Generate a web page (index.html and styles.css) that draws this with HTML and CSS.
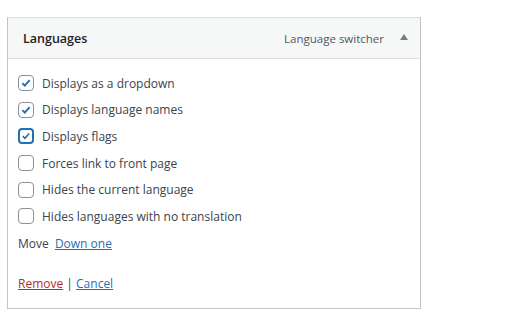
FILE: index.html
```html
<!DOCTYPE html>
<html lang="en">
<head>
    <meta charset="UTF-8">
    <title>Languages widget</title>
    <link rel="stylesheet" href="styles.css">
</head>
<body>
    <div class="widget">
        <div class="widget-top">
            <h3>Languages</h3>
            <span class="in-widget-title">Language switcher</span>
            <span class="toggle"></span>
        </div>
        <div class="widget-inside">
            <ul class="options">
                <li><span class="box checked"><svg viewBox="0 0 16 16"><path d="M3.8 8.2l2.8 2.8 5.6-6.4"/></svg></span>Displays as a dropdown</li>
                <li><span class="box checked"><svg viewBox="0 0 16 16"><path d="M3.8 8.2l2.8 2.8 5.6-6.4"/></svg></span>Displays language names</li>
                <li><span class="box checked focus"><svg viewBox="0 0 16 16"><path d="M3.8 8.2l2.8 2.8 5.6-6.4"/></svg></span>Displays flags</li>
                <li><span class="box"></span>Forces link to front page</li>
                <li><span class="box"></span>Hides the current language</li>
                <li><span class="box"></span>Hides languages with no translation</li>
            </ul>
            <div class="move">Move <a href="#">Down one</a></div>
            <div class="actions"><a class="remove" href="#">Remove</a> | <a href="#">Cancel</a></div>
        </div>
    </div>
</body>
</html>
```

FILE: styles.css
```css
body {
    margin: 0;
    padding: 17px 0 0 7px;
    background: #fff;
    font-family: "Open Sans", sans-serif;
    font-size: 12px;
    color: #3c434a;
}
.widget {
    width: 412px;
    border: 1px solid #c3c4c7;
    border-color: #dcdcde #c3c4c7 #c3c4c7 #c3c4c7;
}
.widget-top {
    display: flex;
    align-items: center;
    height: 40px;
    padding: 0 12px 0 15px;
    background: #f6f7f7;
    border-bottom: 1px solid #dcdcde;
}
h3 {
    margin: 0;
    font-size: 12.5px;
    font-weight: 600;
    color: #1d2327;
    flex: 1;
}
.in-widget-title {
    color: #50575e;
    font-size: 11.5px;
}
.toggle {
    margin-left: 16px;
    width: 0;
    height: 0;
    border-left: 4px solid transparent;
    border-right: 4px solid transparent;
    border-bottom: 6px solid #787c82;
    margin-bottom: 3px;
}
.widget-inside {
    padding: 11px 10px 11px 10px;
}
.options {
    list-style: none;
    margin: 0;
    padding: 0;
}
.options li {
    display: flex;
    align-items: center;
    height: 26.6px;
}
.box {
    box-sizing: border-box;
    width: 16px;
    height: 16px;
    border: 1px solid #8c8f94;
    border-radius: 4px;
    margin-right: 8px;
    display: flex;
}
.box svg {
    width: 14px;
    height: 14px;
    fill: none;
    stroke: #2271b1;
    stroke-width: 2.2;
}
.box.focus {
    border: 2px solid #2271b1;
}
.box.focus svg {
    width: 12px;
    height: 12px;
}
.move {
    margin-top: 1px;
    line-height: 26px;
}
.move a {
    margin-left: 3px;
}
a {
    color: #2271b1;
}
a.remove {
    color: #b32d2e;
}
.actions {
    margin-top: 14px;
    line-height: 26px;
}
```
